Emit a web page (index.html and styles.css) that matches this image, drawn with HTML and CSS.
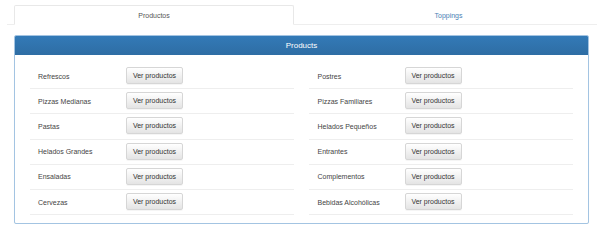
FILE: index.html
```html
<!DOCTYPE html>
<html lang="es">
<head>
<meta charset="utf-8">
<title>Productos</title>
<link rel="stylesheet" href="styles.css">
</head>
<body>
<nav class="tabs">
  <a class="tab active">Productos</a>
  <a class="tab">Toppings</a>
</nav>
<section class="panel">
  <header class="panel-heading">Products</header>
  <div class="panel-body">
    <div class="col">
      <div class="row"><span class="name">Refrescos</span><button class="btn">Ver productos</button></div>
      <div class="row"><span class="name">Pizzas Medianas</span><button class="btn">Ver productos</button></div>
      <div class="row"><span class="name">Pastas</span><button class="btn">Ver productos</button></div>
      <div class="row"><span class="name">Helados Grandes</span><button class="btn">Ver productos</button></div>
      <div class="row"><span class="name">Ensaladas</span><button class="btn">Ver productos</button></div>
      <div class="row"><span class="name">Cervezas</span><button class="btn">Ver productos</button></div>
    </div>
    <div class="col">
      <div class="row"><span class="name">Postres</span><button class="btn">Ver productos</button></div>
      <div class="row"><span class="name">Pizzas Familiares</span><button class="btn">Ver productos</button></div>
      <div class="row"><span class="name">Helados Pequeños</span><button class="btn">Ver productos</button></div>
      <div class="row"><span class="name">Entrantes</span><button class="btn">Ver productos</button></div>
      <div class="row"><span class="name">Complementos</span><button class="btn">Ver productos</button></div>
      <div class="row"><span class="name">Bebidas Alcohólicas</span><button class="btn">Ver productos</button></div>
    </div>
  </div>
</section>
</body>
</html>
```
FILE: styles.css
```css
html, body {
  margin: 0;
  padding: 0;
  background: #fff;
}
body {
  font-family: "Liberation Sans", Arial, sans-serif;
  font-size: 7px;
  color: #444;
  padding-top: 5px;
}
.tabs {
  display: flex;
  margin: 0 3px 0 7px;
  padding-left: 7px;
  border-bottom: 1px solid #eee;
  gap: 6px;
}
.tab {
  display: flex;
  align-items: center;
  justify-content: center;
  height: 20px;
  box-sizing: border-box;
  color: #4a7fb5;
  border: 1px solid transparent;
  border-radius: 2px 2px 0 0;
  margin-bottom: -1px;
}
.tab.active {
  width: 280px;
  color: #555;
  background: #fff;
  border-color: #e8e8e8;
  border-bottom-color: #fff;
}
.tab:not(.active) {
  flex: 1;
}
.panel {
  margin: 10px 11px 0 14px;
  border: 1px solid #a3c4e2;
  border-radius: 2px;
  box-shadow: 0 1px 1px rgba(0, 0, 0, 0.05);
  background: #fff;
}
.panel-heading {
  height: 19px;
  display: flex;
  align-items: center;
  justify-content: center;
  background: linear-gradient(#337ab7, #2e6da4);
  color: #fff;
  font-size: 8px;
  border-radius: 1px 1px 0 0;
}
.panel-body {
  display: grid;
  grid-template-columns: 1fr 1fr;
  padding: 9px 7.5px 7.5px;
}
.col {
  padding: 0 7.5px;
}
.row {
  display: flex;
  align-items: center;
  height: 25.2px;
  box-sizing: border-box;
  border-bottom: 1px solid #eee;
}
.name {
  width: 88px;
  padding-left: 8px;
  flex-shrink: 0;
}
.col + .col .name {
  width: 87px;
  padding-left: 8.5px;
}
.btn {
  font-family: inherit;
  font-size: 7px;
  color: #333;
  width: 57px;
  height: 17px;
  padding: 0;
  border: 1px solid #d6d6d6;
  border-radius: 2px;
  background: linear-gradient(#fff, #e4e4e4);
  box-shadow: 0 1px 0 rgba(0, 0, 0, 0.04);
  margin-top: -1px;
}
```
